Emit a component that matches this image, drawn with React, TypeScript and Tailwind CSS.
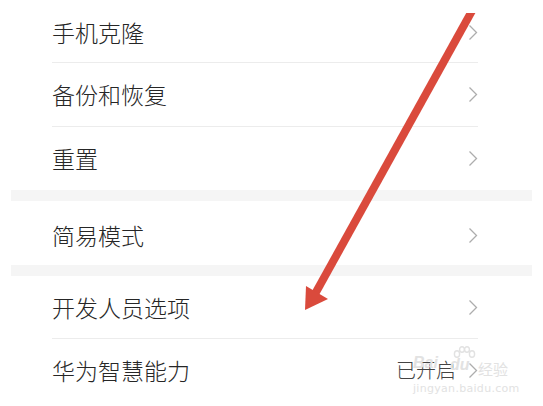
import React from "react";

const font = { fontFamily: '"Noto Sans CJK SC", "Noto Sans", sans-serif' };

const Chevron = () => (
  <svg width="10" height="17" viewBox="0 0 10 17" fill="none" className="shrink-0">
    <path d="M1.5 1.5 L8.5 8.5 L1.5 15.5" stroke="#adadad" strokeWidth="1.3" />
  </svg>
);

type RowProps = { label: string; value?: string; divider?: boolean; h: string };

const Row = ({ label, value, divider, h }: RowProps) => (
  <div className={`flex items-center ml-[52px] mr-[65px] ${h} ${divider ? "border-b border-[#ececec]" : ""}`}>
    <span className="flex-1 text-[23px] text-[#262626] leading-none font-light">{label}</span>
    {value && <span className="text-[20px] text-[#444] leading-none mr-[12px] font-light">{value}</span>}
    <Chevron />
  </div>
);

export default function App() {
  return (
    <div className="relative w-[543px] h-[406px] bg-white overflow-hidden" style={font}>
      <div className="flex flex-col">
        <Row label="手机克隆" h="h-[63px] pt-[3px]" divider />
        <Row label="备份和恢复" h="h-[64px]" divider />
        <Row label="重置" h="h-[63px]" />
        <div className="h-[11px] mx-[11px] bg-[#f5f5f5]" />
        <Row label="简易模式" h="h-[64px] pt-[4px]" />
        <div className="h-[11px] mx-[11px] bg-[#f5f5f5]" />
        <Row label="开发人员选项" h="h-[63px]" divider />
        <Row label="华为智慧能力" value="已开启" h="h-[62px]" />
      </div>

      {/* baidu jingyan watermark */}
      <div className="absolute left-[412px] top-[345px] w-[100px] h-[52px] text-[#e2e2e2] pointer-events-none">
        <span className="absolute left-[1px] top-[10px] text-[16px] font-bold italic leading-none" style={{ fontFamily: '"Liberation Sans", sans-serif' }}>
          Bai
        </span>
        <svg className="absolute left-[40px] top-[1px]" width="24" height="16" viewBox="0 0 24 16">
          <ellipse cx="5" cy="8" rx="2.6" ry="3.2" fill="none" stroke="#e2e2e2" strokeWidth="1.4" />
          <ellipse cx="10" cy="3.5" rx="2.4" ry="2.8" fill="none" stroke="#e2e2e2" strokeWidth="1.4" />
          <ellipse cx="15" cy="3.5" rx="2.4" ry="2.8" fill="none" stroke="#e2e2e2" strokeWidth="1.4" />
          <ellipse cx="20" cy="8" rx="2.6" ry="3.2" fill="none" stroke="#e2e2e2" strokeWidth="1.4" />
        </svg>
        <span className="absolute left-[38px] top-[12px] text-[16px] font-bold italic leading-none" style={{ fontFamily: '"Liberation Sans", sans-serif' }}>
          du
        </span>
        <span className="absolute left-[66px] top-[16px] text-[15px] leading-none">经验</span>
        <span className="absolute left-[1px] top-[38px] text-[11px] leading-none tracking-[0.3px]" style={{ fontFamily: '"DejaVu Sans", sans-serif' }}>
          jingyan.baidu.com
        </span>
      </div>

      {/* red annotation arrow */}
      <svg className="absolute inset-0 pointer-events-none" width="543" height="406" viewBox="0 0 543 406">
        <defs>
          <clipPath id="clipTop">
            <rect x="0" y="13" width="543" height="393" />
          </clipPath>
        </defs>
        <line x1="478" y1="0" x2="315" y2="294" stroke="#da4a3c" strokeWidth="8" clipPath="url(#clipTop)" />
        <polygon points="305,310 306,286 328,299" fill="#da4a3c" />
      </svg>
    </div>
  );
}
